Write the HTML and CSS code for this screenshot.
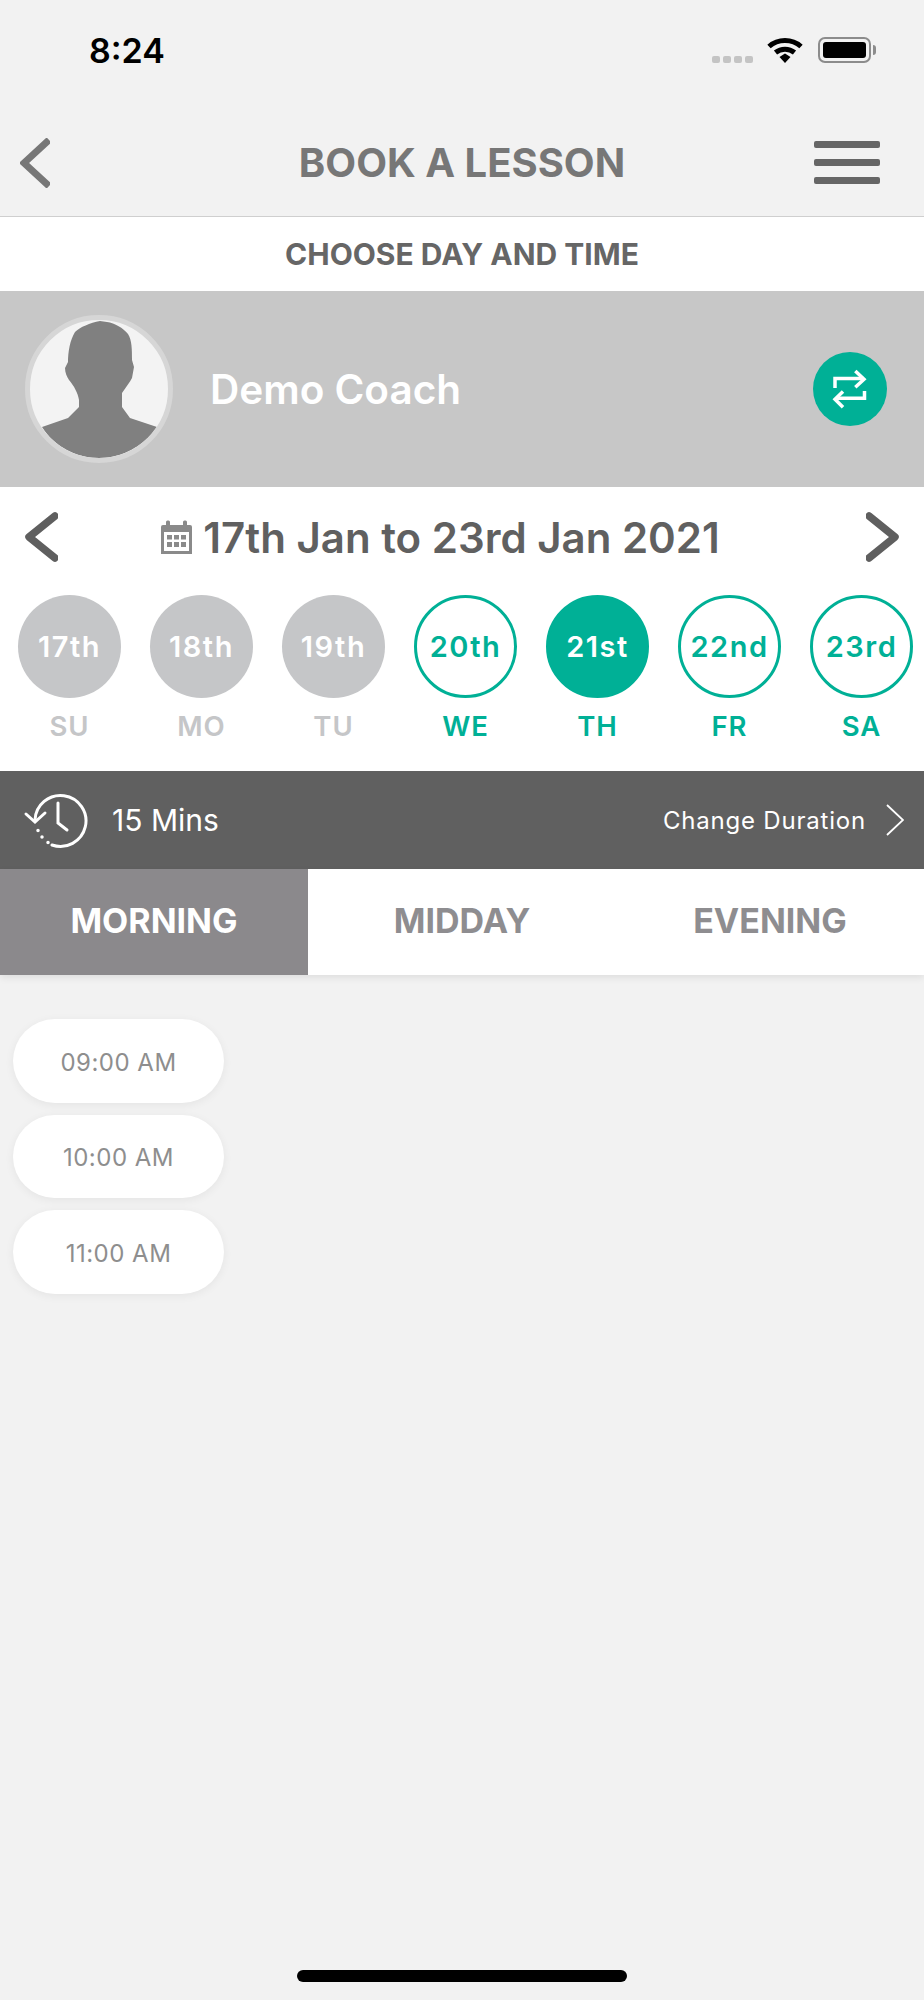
FILE: index.html
```html
<!DOCTYPE html>
<html lang="en">
<head>
  <meta charset="UTF-8" />
  <meta name="viewport" content="width=device-width, initial-scale=1.0"/>
  <title>Book a lesson</title>
  <link rel="stylesheet" href="styles.css">
</head>
<body>

<div class="screen">

  <div class="status">
    <span class="clock">8:24</span>
    <div class="status-icons">
      <div class="signal"><i></i><i></i><i></i><i></i></div>
      <svg class="wifi" width="36" height="26" viewBox="0 0 36 26">
        <path d="M2 9.5C11 1.5 25 1.5 34 9.5" fill="none" stroke="#000" stroke-width="5"/>
        <path d="M8.5 15.5C14 11 22 11 27.500 15.500" fill="none" stroke="#000" stroke-width="5"/>
        <path d="M12.500 20L18 16.500L23.500 20L18 26Z" fill="#000"/>
      </svg>
      <div class="battery"><div class="battery-fill"></div></div>
    </div>
  </div>

  <header class="topbar">
    <svg class="back" width="30" height="50" viewBox="0 0 30 50">
      <path d="M29 2L4 25L29 48" fill="none" stroke="#777" stroke-width="7"/>
    </svg>
    <h1>BOOK A LESSON</h1>
    <div class="burger"><i></i><i></i><i></i></div>
  </header>

  <div class="subtitle">CHOOSE DAY AND TIME</div>

  <div class="coach">
    <div class="avatar">
      <svg width="138" height="138" viewBox="0 0 138 138">
        <path d="M70 1C60 3 50 7 45 12C40 20 38 32 38 42L35 48C35 53 37 57 39 60C44 66 48 73 49 80L49 87L38 98L12 107C24 126 45 138 69 138C93 138 114 126 127 107L100 98L92 87L92 73C96 67 100 62 102 58L104 47L102 40C102 30 102 20 98 14C93 8 85 3 77 2Z" fill="#808080"/>
      </svg>
    </div>
    <span class="coach-name">Demo Coach</span>
    <div class="swap">
      <svg width="74" height="74" viewBox="0 0 74 74" fill="none" stroke="#fff" stroke-width="3.500">
        <path d="M22 36V26.500H50.500"/>
        <path d="M42.300 19L51 27.200L42.300 35.300"/>
        <path d="M51.500 39V46.300H23"/>
        <path d="M30 39.500L22 47.300L30 55.300"/>
      </svg>
    </div>
  </div>

  <section class="week">
    <div class="week-head">
      <svg width="34" height="50" viewBox="0 0 34 50">
        <path d="M31 4L5 25L31 46" fill="none" stroke="#5f5f5f" stroke-width="7.500" stroke-linejoin="round" stroke-linecap="round"/>
      </svg>
      <div class="week-title">
        <svg width="33" height="35" viewBox="0 0 33 35">
          <path d="M1 7Q1 5 3 5H30Q32 5 32 7V34H1Z" fill="#8a8a8a"/>
          <rect x="6" y="0.500" width="4" height="8" rx="1.500" fill="#8a8a8a"/>
          <rect x="23" y="0.500" width="4" height="8" rx="1.500" fill="#8a8a8a"/>
          <rect x="4" y="12" width="25" height="19" fill="#fff"/>
          <path d="M7 15H12V19.500H7ZM14 15H19V19.500H14ZM21 15H26V19.500H21ZM7 22H12V27H7ZM14 22H19V27H14ZM21 22H26V27H21Z" fill="#8a8a8a"/>
        </svg>
        <span>17th Jan to 23rd Jan 2021</span>
      </div>
      <svg width="34" height="50" viewBox="0 0 34 50">
        <path d="M3 4L29 25L3 46" fill="none" stroke="#5f5f5f" stroke-width="7.500" stroke-linejoin="round" stroke-linecap="round"/>
      </svg>
    </div>
    <div class="days">
      <div class="day past"><div class="dot">17th</div><span>SU</span></div>
      <div class="day past"><div class="dot">18th</div><span>MO</span></div>
      <div class="day past"><div class="dot">19th</div><span>TU</span></div>
      <div class="day"><div class="dot">20th</div><span>WE</span></div>
      <div class="day current"><div class="dot">21st</div><span>TH</span></div>
      <div class="day"><div class="dot">22nd</div><span>FR</span></div>
      <div class="day"><div class="dot">23rd</div><span>SA</span></div>
    </div>
  </section>

  <div class="duration">
    <svg class="history" width="70" height="60" viewBox="0 0 70 60" fill="none" stroke="#fff" stroke-width="3" stroke-linecap="round">
      <path d="M15 30A25.500 25.500 0 1 1 32 55"/>
      <path d="M6 24L15 32L25 23"/>
      <path d="M38 13V33L47 40"/>
      <path d="M18 40.500V40.600M22 47V47.100M28 52.500V52.600" stroke-width="3.500"/>
    </svg>
    <span class="mins">15 Mins</span>
    <span class="change">Change Duration</span>
    <svg width="18" height="32" viewBox="0 0 18 32">
      <path d="M1 1L17 16L1 31" fill="none" stroke="#fff" stroke-width="1.800"/>
    </svg>
  </div>

  <nav class="tabs">
    <div class="tab active">MORNING</div>
    <div class="tab">MIDDAY</div>
    <div class="tab">EVENING</div>
  </nav>

  <div class="slots">
    <div class="slot">09:00 AM</div>
    <div class="slot">10:00 AM</div>
    <div class="slot">11:00 AM</div>
  </div>

  <div class="home-bar"></div>

</div>

</body>
</html>
```

FILE: styles.css
```css
:root {
  --bg: #f2f2f2;
  --green: #00b096;
  --dark: #606060;
  --text: #666;
  --muted: #8e8d90;
}
* {
  box-sizing: border-box;
}
body {
  margin: 0;
  font-family: Inter, "Liberation Sans", sans-serif;
  background: var(--bg);
}
.screen {
  height: 2000px;
  display: flex;
  flex-direction: column;
}

/* status bar */
.status {
  height: 109px;
  flex: none;
  padding: 0 53px 9px 89px;
  display: flex;
  align-items: center;
  justify-content: space-between;
}
.clock {
  font-size: 34px;
  font-weight: 600;
  color: #000;
}
.status-icons {
  display: flex;
  align-items: flex-end;
}
.signal {
  display: flex;
  gap: 3px;
  margin-right: 14px;
}
.signal i {
  width: 8px;
  height: 7px;
  border-radius: 2px;
  background: #c4c4c4;
}
.wifi {
  margin-right: 15px;
}
.battery {
  position: relative;
  width: 53px;
  height: 26px;
  padding: 3px;
  border: 2px solid #8c8c8c;
  border-radius: 7px;
}
.battery::after {
  content: "";
  position: absolute;
  right: -7px;
  top: 6px;
  width: 3px;
  height: 10px;
  background: #8c8c8c;
  border-radius: 0 3px 3px 0;
}
.battery-fill {
  height: 100%;
  background: #000;
  border-radius: 3px;
}

/* header */
.topbar {
  height: 108px;
  flex: none;
  padding: 0 20px;
  display: grid;
  grid-template-columns: 1fr auto 1fr;
  align-items: center;
  border-bottom: 1px solid #cfcfcf;
}
.topbar h1 {
  margin: 0;
  font-size: 40px;
  font-weight: 700;
  color: #777;
}
.burger {
  justify-self: end;
  margin-right: 24px;
  display: flex;
  flex-direction: column;
  gap: 11px;
}
.burger i {
  display: block;
  width: 66px;
  height: 7px;
  border-radius: 2px;
  background: #666;
}
.subtitle {
  height: 74px;
  flex: none;
  background: #fff;
  display: flex;
  align-items: center;
  justify-content: center;
  font-size: 30px;
  font-weight: 700;
  color: var(--text);
}

/* coach */
.coach {
  height: 196px;
  flex: none;
  padding: 0 37px 0 25px;
  background: #c7c7c7;
  display: flex;
  align-items: center;
}
.avatar {
  width: 148px;
  height: 148px;
  border: 5px solid #d6d6d6;
  border-radius: 50%;
  background: #f3f3f3;
  overflow: hidden;
}
.avatar svg {
  display: block;
}
.coach-name {
  margin-left: 37px;
  font-size: 40.500px;
  font-weight: 600;
  color: #fff;
}
.swap {
  margin-left: auto;
  width: 74px;
  height: 74px;
  border-radius: 50%;
  background: var(--green);
}

/* week picker */
.week {
  flex: none;
  background: #fff;
  padding-bottom: 28px;
}
.week-head {
  height: 108px;
  padding: 0 24px 8px;
  display: flex;
  align-items: center;
  justify-content: space-between;
}
.week-title {
  margin-right: 44px;
  display: flex;
  align-items: center;
  gap: 10px;
  font-size: 42px;
  font-weight: 600;
  color: var(--dark);
}
.days {
  padding-left: 18px;
  display: flex;
  gap: 29px;
}
.day {
  width: 103px;
  display: flex;
  flex-direction: column;
  align-items: center;
  gap: 11px;
  font-size: 29px;
  font-weight: 600;
  letter-spacing: 1.500px;
  color: var(--green);
}
.day span {
  font-size: 27.500px;
  letter-spacing: 1px;
  line-height: 34px;
}
.dot {
  width: 103px;
  height: 103px;
  border: 3.500px solid var(--green);
  border-radius: 50%;
  display: flex;
  align-items: center;
  justify-content: center;
}
.day.past {
  color: #c5c6c8;
}
.day.past .dot {
  border: none;
  background: #c5c6c8;
  color: #fff;
}
.day.current .dot {
  background: var(--green);
  color: #fff;
}

/* duration */
.duration {
  height: 98px;
  flex: none;
  padding: 0 20px 0 20px;
  background: var(--dark);
  color: #fff;
  display: flex;
  align-items: center;
}
.mins {
  margin-left: 22px;
  font-size: 30px;
}
.change {
  margin-left: auto;
  margin-right: 20px;
  font-size: 24px;
  letter-spacing: 0.800px;
}

/* tabs */
.tabs {
  height: 106px;
  flex: none;
  display: grid;
  grid-template-columns: repeat(3, 1fr);
  background: #fff;
  box-shadow: 0 3px 7px rgba(0,0,0,0.08);
}
.tab {
  padding-bottom: 3px;
  display: flex;
  align-items: center;
  justify-content: center;
  font-size: 34px;
  font-weight: 700;
  color: var(--muted);
}
.tab.active {
  background: #8b898c;
  color: #fff;
}

/* time slots */
.slots {
  padding: 44px 0 0 13px;
  display: flex;
  flex-direction: column;
  gap: 12px;
}
.slot {
  width: 211px;
  height: 83.500px;
  padding-top: 3px;
  border-radius: 42px;
  background: #fff;
  box-shadow: 0 2px 10px rgba(0,0,0,0.06);
  display: flex;
  align-items: center;
  justify-content: center;
  font-size: 24px;
  letter-spacing: 0.500px;
  color: #8e8e8e;
}

.home-bar {
  margin: auto auto 18px;
  width: 330px;
  height: 12px;
  border-radius: 6px;
  background: #000;
}
```
